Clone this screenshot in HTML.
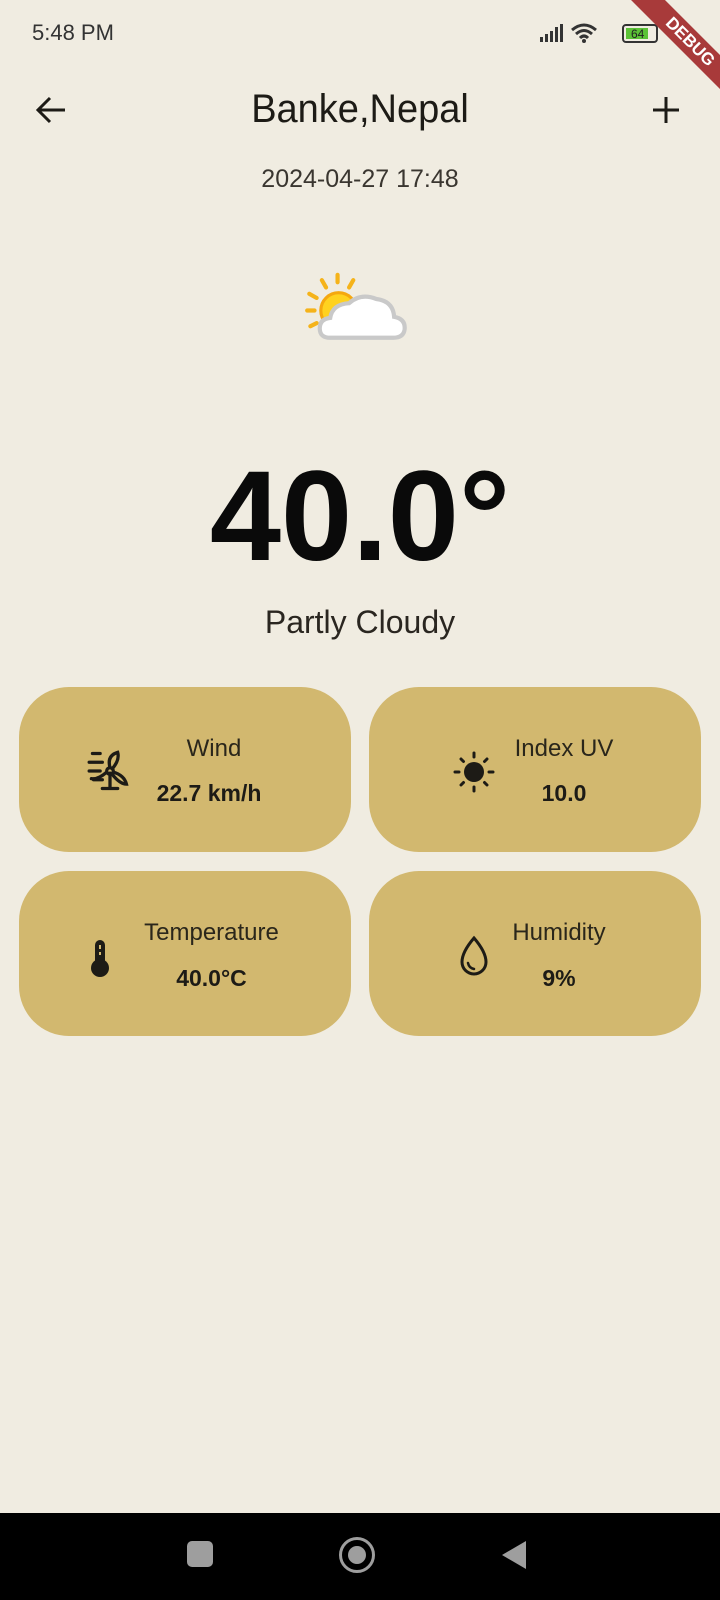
<!DOCTYPE html>
<html><head><meta charset="utf-8"><style>
*{margin:0;padding:0;box-sizing:border-box}
body{width:720px;height:1600px;background:#f0ece1;font-family:"Liberation Sans",sans-serif;color:#1d1b16;position:relative;overflow:hidden}
.abs{position:absolute}
.card{position:absolute;width:332px;height:165px;background:#d2b86f;border-radius:50px}
.card .lbl{position:absolute;font-size:24px;font-weight:300;color:#2a261b;text-align:center}
.card .val{position:absolute;font-size:23px;font-weight:bold;text-align:center}
</style></head><body>
<div class="abs" style="left:32px;top:20px;font-size:22px;color:#333">5:48 PM</div>
<svg class="abs" style="left:540px;top:22px" width="150" height="24" viewBox="0 0 150 24">
<rect x="0" y="15" width="3" height="5" fill="#333"/><rect x="5" y="12" width="3" height="8" fill="#333"/><rect x="10" y="9" width="3" height="11" fill="#333"/><rect x="15" y="5" width="3" height="15" fill="#333"/><rect x="20" y="2" width="3" height="18" fill="#333"/>
<path d="M32 8 Q44 -2 56 8 M36 12 Q44 5 52 12 M40 16 Q44 12 48 16" stroke="#333" stroke-width="3" fill="none"/><circle cx="44" cy="19" r="2" fill="#333"/>
<rect x="83" y="3" width="34" height="17" rx="3" fill="none" stroke="#333" stroke-width="2"/><rect x="86" y="6" width="22" height="11" fill="#5bc236"/>
<text x="91" y="16" font-size="12" fill="#222" font-family="Liberation Sans">64</text>
</svg>
<div class="abs" style="left:590px;top:30px;width:200px;height:24px;background:#a83a3a;transform:rotate(45deg);color:#fff;font-weight:bold;font-size:17px;text-align:center;line-height:24px">DEBUG</div>
<svg class="abs" style="left:34px;top:95px" width="34" height="30" viewBox="0 0 34 30"><path d="M31 15H4M16 3L4 15L16 27" stroke="#1d1b16" stroke-width="3" fill="none"/></svg>
<svg class="abs" style="left:652px;top:96px" width="28" height="28"><path d="M14 1V27M1 14H27" stroke="#1d1b16" stroke-width="3"/></svg>
<div class="abs" style="left:0;width:720px;top:87px;text-align:center;font-size:40px;transform:scaleX(0.95)">Banke,Nepal</div>
<div class="abs" style="left:0;width:720px;top:165px;text-align:center;font-size:25px;font-weight:300;color:#3a3630">2024-04-27 17:48</div>
<svg class="abs" style="left:303px;top:270px" width="110" height="80" viewBox="0 0 105 75">
<g stroke="#f5b31a" stroke-width="4" stroke-linecap="round"><path d="M33 4V11M48 9L44 16M18 9L22 16M6 22L13 26M4 38H11M7 53L13 50"/></g>
<circle cx="34" cy="38" r="17" fill="#ffd21f" stroke="#f5a80f" stroke-width="3"/>
<path d="M26 64 Q16 64 16 55 Q16 46 26 45 Q28 32 44 31 Q55 21 70 27 Q86 29 87 44 Q98 46 97 56 Q96 64 86 64 Z" fill="#fff" stroke="#c9c9c9" stroke-width="4"/>
</svg>
<div class="abs" style="left:0;width:720px;top:443px;text-align:center;font-size:128px;font-weight:bold;color:#0a0a0a;letter-spacing:0px">40.0°</div>
<div class="abs" style="left:0;width:720px;top:604px;text-align:center;font-size:32px;font-weight:300;color:#2a2620">Partly Cloudy</div>

<div class="card" style="left:19px;top:687px">
<svg class="abs" style="left:68px;top:62px" width="46" height="44" viewBox="0 0 42 40"><g stroke="#1d1b16" stroke-width="3" fill="none" stroke-linecap="round"><path d="M5 4H12M2 12H14M2 20H12M6 28H14M14 36H28M21 36V22"/><circle cx="21" cy="20" r="3"/><path d="M21 17 Q18 6 28 3 Q30 10 23 18M24 21 Q34 24 36 32 Q30 32 23 23M18 21 Q10 28 4 27"/></g></svg>
<div class="lbl" style="left:140px;width:110px;top:48px">Wind</div>
<div class="val" style="left:110px;width:160px;top:93px">22.7 km/h</div></div>

<div class="card" style="left:369px;top:687px">
<svg class="abs" style="left:84px;top:64px" width="42" height="42" viewBox="0 0 42 42"><circle cx="21" cy="21" r="10" fill="#1d1b16"/><g stroke="#1d1b16" stroke-width="3" stroke-linecap="round"><path d="M21 2V6M21 36V40M2 21H6M36 21H40M8 8L10.5 10.5M31.5 31.5L34 34M8 34L10.5 31.5M31.5 10.5L34 8"/></g></svg>
<div class="lbl" style="left:120px;width:150px;top:48px">Index UV</div>
<div class="val" style="left:120px;width:150px;top:93px">10.0</div></div>

<div class="card" style="left:19px;top:871px">
<svg class="abs" style="left:70px;top:66px" width="22" height="42" viewBox="0 0 22 42"><rect x="6" y="3" width="10" height="26" rx="5" fill="#1d1b16"/><circle cx="11" cy="31" r="9" fill="#1d1b16"/><path d="M11 8V12M11 15V18" stroke="#d2b86f" stroke-width="2"/></svg>
<div class="lbl" style="left:110px;width:165px;top:48px">Temperature</div>
<div class="val" style="left:110px;width:165px;top:94px">40.0°C</div></div>

<div class="card" style="left:369px;top:871px">
<svg class="abs" style="left:88px;top:64px" width="34" height="42" viewBox="0 0 34 42"><path d="M17 3 Q5 17 5 27 A12 12 0 0 0 29 27 Q29 17 17 3Z" fill="none" stroke="#1d1b16" stroke-width="3"/><path d="M11 28 Q12 33 17 34" stroke="#1d1b16" stroke-width="2.5" fill="none" stroke-linecap="round"/></svg>
<div class="lbl" style="left:125px;width:130px;top:48px">Humidity</div>
<div class="val" style="left:125px;width:130px;top:94px">9%</div></div>

<div class="abs" style="left:0;top:1513px;width:720px;height:87px;background:#000"></div>
<div class="abs" style="left:187px;top:1541px;width:26px;height:26px;border-radius:5px;background:#9e9e9e"></div>
<div class="abs" style="left:339px;top:1537px;width:36px;height:36px;border-radius:50%;border:3px solid #9e9e9e"></div>
<div class="abs" style="left:348px;top:1546px;width:18px;height:18px;border-radius:50%;background:#9e9e9e"></div>
<svg class="abs" style="left:500px;top:1539px" width="28" height="32"><path d="M26 2V30L2 16Z" fill="#9e9e9e"/></svg>
</body></html>
